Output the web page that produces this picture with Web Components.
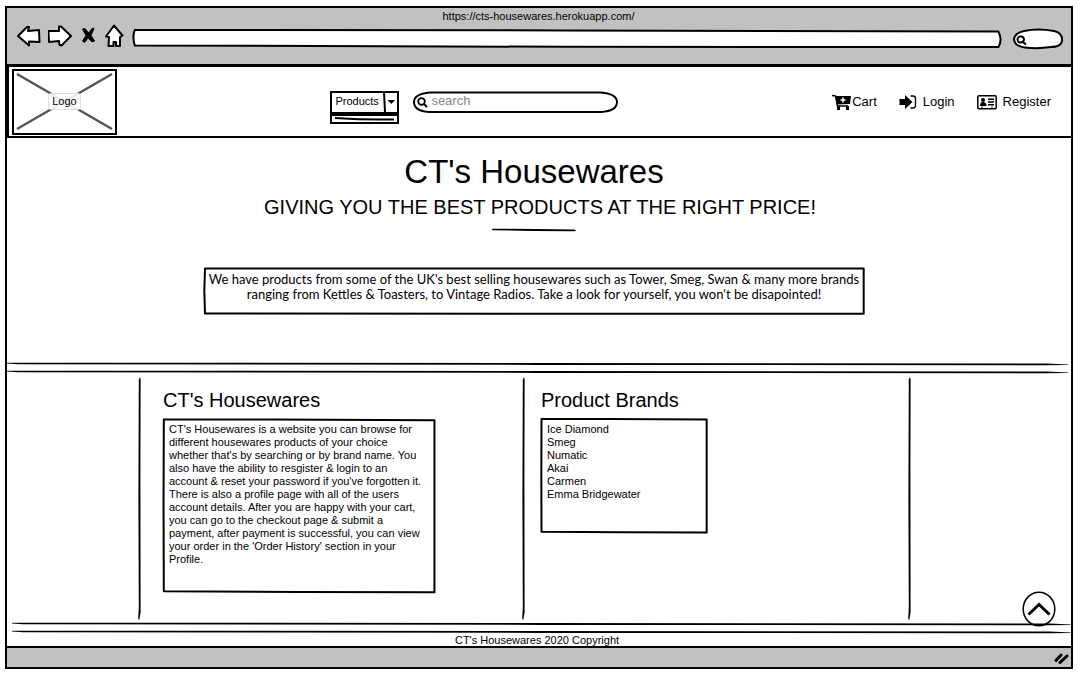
<!DOCTYPE html>
<html lang="en">
<head>
<meta charset="utf-8">
<title>CT's Housewares</title>
<style>
body { margin: 0; background: #fff; color: #000; font: 11px/13px "Liberation Sans", Arial, sans-serif; }
</style>
</head>
<body>
<browser-window address="https://cts-housewares.herokuapp.com/">
  <site-header></site-header>
  <site-hero></site-hero>
  <site-columns></site-columns>
  <site-footer></site-footer>
</browser-window>

<script>
const define = (name, html) => customElements.define(name, class extends HTMLElement {
  connectedCallback() {
    if (this.shadowRoot) return;
    this.attachShadow({ mode: 'open' }).innerHTML = '<style>*{box-sizing:border-box}</style>' +
      html.replace(/\{\{(\w+)\}\}/g, (_, k) => this.getAttribute(k) || '');
  }
});

/* Hand-drawn rectangle around slotted content */
define('sketch-box', `
<style>
:host { display: block; position: relative; }
svg { position: absolute; inset: 0; width: 100%; height: 100%; overflow: visible; pointer-events: none; }
path { fill: none; stroke: #000; stroke-width: 2; stroke-linejoin: round; vector-effect: non-scaling-stroke; }
</style>
<slot></slot>
<svg viewBox="0 0 100 100" preserveAspectRatio="none" aria-hidden="true"><path d="M.3 .9 L40 .9 L99.800 1.300 L99.800 50 L99.800 99.500 L50 99.400 L.3 99 L.2 50Z"/></svg>`);

/* Hand-drawn horizontal rule with tapered ends */
define('sketch-rule', `
<style>
:host { display: block; height: 4px; }
svg { display: block; width: 100%; height: 100%; }
</style>
<svg viewBox="0 0 100 4" preserveAspectRatio="none" aria-hidden="true"><path d="M0 .8 L1 .7 L50 1 L98 1.600 L100 2.400 L100 2.900 L98 3.200 L50 2.900 L1 2.300 L0 1.400Z"/></svg>`);

/* Hand-drawn vertical rule */
define('sketch-divider', `
<style>
:host { display: block; width: 4px; }
svg { display: block; width: 100%; height: 100%; }
</style>
<svg viewBox="0 0 4 100" preserveAspectRatio="none" aria-hidden="true"><path d="M.8 1 L2 0 L2.600 1 L2.400 40 L2.600 97 L1.200 100 L.2 99.600 L.8 95 L.4 50Z"/></svg>`);

define('browser-window', `
<style>
:host { display: block; padding: 6px 5px; }
.window { border: 2px solid #000; }
.chrome { background: #c1c1c1; border-bottom: 3px solid #000; height: 59px; padding: 2px 8px 0 9px; }
.title { text-align: center; line-height: 13px; padding-right: 2px; }
.tools { display: flex; align-items: center; height: 28px; }
button { border: 0; padding: 0; background: none; display: block; }
button svg, .find svg { display: block; }
.icons { display: flex; gap: 7px; align-items: center; margin-top: -2px; }
.icons svg path { fill: #fff; stroke: #000; stroke-width: 2; stroke-linejoin: round; }
.icons svg .solid { fill: none; stroke-width: 4; stroke-linecap: round; }
.address { flex: 1; position: relative; margin: 4px 12px 0 8px; height: 20px; }
.address svg, .find svg.frame { position: absolute; inset: 0; width: 100%; height: 100%; overflow: visible; }
.frame path { fill: #fff; stroke: #000; stroke-width: 2; vector-effect: non-scaling-stroke; }
input { position: relative; display: block; width: 100%; height: 100%; border: 0; background: none; outline: 0; padding: 0 10px; font: inherit; }
.find { position: relative; width: 50px; height: 20px; margin-top: 4px; }
.find .glass { position: absolute; left: 3px; top: 6px; }
.status { display: flex; justify-content: flex-end; align-items: center; height: 21px; background: #c1c1c1; border-top: 2px solid #000; padding-right: 2px; }
</style>
<div class="window">
  <div class="chrome">
    <div class="title">{{address}}</div>
    <div class="tools">
      <div class="icons">
        <button aria-label="Back"><svg width="25" height="22" viewBox="0 0 25 22"><path d="M2 11 L11 2 L13 2 L12 6 L23 5 L23.500 17 L13 16.500 L13 20.500Z"/></svg></button>
        <button aria-label="Forward"><svg width="25" height="22" viewBox="0 0 25 22"><path d="M.5 6 L11 6 L11 1.500 L13 1.500 L23 11 L13.500 20.500 L11.500 20 L11 16 L1 17Z"/></svg></button>
        <button aria-label="Stop"><svg width="18" height="22" viewBox="0 0 18 22"><path d="M2.500 4 L5 3.500 L8.500 8 L12.500 3 L14 3.500 L11 10.500 L14.500 16 L12 17 L8 13 L4.500 17.500 L2.500 16 L6 10.500Z" style="fill:#000;stroke-width:1"/></svg></button>
        <button aria-label="Home"><svg width="20" height="24" viewBox="0 0 20 24"><path d="M9 1.500 L17.500 11.500 L15 13 L15 22 L11 22 L11 18 L8.500 18 L8.500 22 L3.500 22 L4 13 L1 12.500Z"/></svg></button>
      </div>
      <div class="address">
        <svg class="frame" viewBox="0 0 100 20" preserveAspectRatio="none" aria-hidden="true"><path d="M.2 1 L50 1.400 L99.700 2.500 Q100.200 11 99.700 18 L50 17.800 L.2 16.500 Q-.1 8 .2 1Z"/></svg>
        <input aria-label="Address">
      </div>
      <div class="find">
        <svg class="frame" viewBox="0 0 50 20" preserveAspectRatio="none" aria-hidden="true"><path d="M11 2 Q25 -1 41 2 Q50 4 49 12 Q48 18 38 18 Q25 20 12 18.500 Q1 17 1 10 Q2 4 11 2Z"/></svg>
        <svg class="glass" width="12" height="12" viewBox="0 0 12 12" aria-hidden="true"><path d="M5 1.500 Q2 1 1.500 4.500 Q2 8 5 7.500 Q8 7 8 4 Q7 1 5 1.500 M7 7 L10 9.500" fill="none" stroke="#000" stroke-width="2"/></svg>
        <input aria-label="Web search">
      </div>
    </div>
  </div>
  <slot></slot>
  <div class="status"><svg width="15" height="12" viewBox="0 0 15 12" aria-hidden="true"><path d="M2 8.500 L7 3 M6 10.500 L13 4" fill="none" stroke="#000" stroke-width="3" stroke-linecap="round"/></svg></div>
</div>`);

define('logo-placeholder', `
<style>
:host { display: grid; place-items: center; position: relative; width: 105px; height: 66px; border: 2px solid #000; }
svg { position: absolute; inset: 0; width: 100%; height: 100%; }
span { position: relative; padding: 1px 3px; line-height: 13px; border: 1px solid #ddd; border-radius: 3px; background: rgba(255,255,255,.88); }
</style>
<svg viewBox="0 0 101 62" preserveAspectRatio="none" aria-hidden="true"><path d="M3 3 L98 58 M98 3 L3 58" stroke="#555" stroke-width="2.500"/></svg>
<span>Logo</span>`);

define('nav-link', `
<style>
a { display: flex; align-items: center; color: #000; text-decoration: none; font-size: 13px; line-height: 16px; }
</style>
<a href="{{to}}"><slot></slot></a>`);

define('site-header', `
<style>
:host { display: grid; grid-template-columns: 322fr 289fr 453fr; align-items: center; height: 69px; border-bottom: 2px solid #000; border-left: 2px solid #000; }
logo-placeholder { margin: 0 0 0 3px; }
form { display: flex; align-items: flex-start; gap: 14px; padding-top: 11px; }
.menu { position: relative; width: 69px; }
select { display: block; appearance: none; width: 100%; height: 22px; padding: 0 0 2px 3px; font: inherit; color: #000; background: #fff; border: 2px solid #000; border-bottom-width: 1px; border-radius: 0; }
.arrow { position: absolute; right: 0; top: 0; pointer-events: none; }
.drawer { height: 11px; border: 2px solid #000; border-top-width: 3px; padding-top: 1px; }
.search { position: relative; flex: 1; height: 22px; max-width: 205px; }
.search .frame { position: absolute; inset: 0; width: 100%; height: 100%; }
.glass { position: absolute; left: 4px; top: 6px; }
input { position: relative; display: block; width: 100%; height: 100%; border: 0; background: none; padding: 0 8px 2px 18px; font: inherit; font-size: 13px; outline: 0; }
input::placeholder { color: #888; opacity: 1; }
nav { display: flex; justify-content: flex-end; align-items: center; gap: 22px; padding-right: 20px; }
nav svg { display: block; }
.gap { margin-right: 6px; }
</style>
<logo-placeholder></logo-placeholder>
<form>
  <div class="menu">
    <select aria-label="Products"><option>Products</option></select>
    <svg class="arrow" width="17" height="22" viewBox="0 0 17 22" aria-hidden="true"><path d="M2 1 L3 21" stroke="#000" stroke-width="2"/><path d="M5.500 9 L13 9 L9.300 13Z"/></svg>
    <div class="drawer"><svg style="display:block" width="65" height="5" viewBox="0 0 65 5" aria-hidden="true"><path d="M3 1 Q32 3 62 2.500" fill="none" stroke="#000" stroke-width="2"/></svg></div>
  </div>
  <div class="search">
    <svg class="frame" viewBox="0 0 205 22" preserveAspectRatio="none" aria-hidden="true"><path d="M17 1.500 L188 1.500 Q204 3 204 11 Q204 20 188 21 L16 21 Q1 20 1 11 Q1 3 17 1.500Z" fill="#fff" stroke="#000" stroke-width="2"/></svg>
    <svg class="glass" width="12" height="12" viewBox="0 0 12 12" aria-hidden="true"><circle cx="4.500" cy="4.500" r="3.300" fill="none" stroke="#000" stroke-width="1.800"/><path d="M7 7 L10 10" stroke="#000" stroke-width="2"/></svg>
    <input type="search" placeholder="search" aria-label="Search products">
  </div>
</form>
<nav>
  <nav-link to="#cart"><svg width="20" height="16" viewBox="0 0 20 16" aria-hidden="true"><path d="M0 1.500 L3.500 2 L5.500 12 H16" fill="none" stroke="#000" stroke-width="1.500"/><path d="M3.500 2 H19 L18 10 L5 10.500Z"/><path d="M5 12 H8 V16 H5Z M14 12 H17 V16 H14Z"/><path d="M11 3.500 V8.500 M8.500 6 H13.500" stroke="#fff" stroke-width="1.500"/></svg>Cart</nav-link>
  <nav-link to="#login"><svg class="gap" width="18" height="16" viewBox="0 0 18 16" aria-hidden="true"><path d="M.5 5 H6 V1 L13.500 8 L6 15 V11 H.5Z"/><path d="M11.500 2 H14 Q16.500 2 16.500 4.500 V11.500 Q16.500 14 14 14 H11.500" fill="none" stroke="#000" stroke-width="1.300"/></svg>Login</nav-link>
  <nav-link to="#register"><svg class="gap" width="20" height="16" viewBox="0 0 20 16" aria-hidden="true"><rect x=".8" y="1.800" width="18.400" height="13" rx="1" fill="none" stroke="#000" stroke-width="1.500"/><circle cx="6" cy="6" r="2"/><path d="M3 12 Q3 8 6 8 Q9.500 8 9.500 12Z M11 4.500 H17 V6 H11Z M11 7.300 H17 V8.800 H11Z M11 10 H17 V11.500 H11Z"/><path d="M5 12.500 V15 M15 12.500 V15" stroke="#000"/></svg>Register</nav-link>
</nav>`);

define('site-hero', `
<style>
:host { display: flex; flex-direction: column; align-items: center; padding: 14px 10px 48px 0; text-align: center; }
h1 { margin: 0; font-size: 33px; line-height: 40px; font-weight: 400; }
h2 { margin: 2px 0 8px; padding-left: 12px; font-size: 20px; line-height: 26px; font-weight: 400; }
sketch-rule { width: 84px; margin-bottom: 36px; }
sketch-box { width: 662px; max-width: 100%; padding: 4px 4px 12px; }
p { margin: 0; font: 13px/15px Lato, "Liberation Sans", sans-serif; }
</style>
<h1>CT's Housewares</h1>
<h2>GIVING YOU THE BEST PRODUCTS AT THE RIGHT PRICE!</h2>
<sketch-rule></sketch-rule>
<sketch-box><p>We have products from some of the UK's best selling housewares such as Tower, Smeg, Swan &amp; many more brands<br>ranging from Kettles &amp; Toasters, to Vintage Radios. Take a look for yourself, you won't be disapointed!</p></sketch-box>`);

define('site-columns', `
<style>
:host { display: block; }
.rules { display: grid; gap: 4px; padding-right: 3px; }
.grid { display: grid; grid-template-columns: 130fr 384fr 386fr 164fr; min-height: 243px; margin-top: 3px; }
section { display: flex; padding-left: 1px; }
.body { padding: 11px 0 0 21px; }
section + section .body { padding-left: 15px; }
h3 { margin: 0 0 6px; font-size: 20px; line-height: 24px; font-weight: 400; }
sketch-box { padding: 5px 6px; }
.about { width: 272px; min-height: 175px; }
.brands { width: 166px; min-height: 115px; }
p, ul { margin: 0; padding: 0; list-style: none; }
</style>
<div class="rules"><sketch-rule></sketch-rule><sketch-rule></sketch-rule></div>
<div class="grid">
  <div></div>
  <section><sketch-divider></sketch-divider>
    <div class="body"><h3>CT's Housewares</h3>
      <sketch-box class="about"><p>CT's Housewares is a website you can browse for<br>different housewares products of your choice<br>whether that's by searching or by brand name. You<br>also have the ability to resgister &amp; login to an<br>account &amp; reset your password if you've forgotten it.<br>There is also a profile page with all of the users<br>account details. After you are happy with your cart,<br>you can go to the checkout page &amp; submit a<br>payment, after payment is successful, you can view<br>your order in the 'Order History' section in your<br>Profile.</p></sketch-box>
    </div>
  </section>
  <section><sketch-divider></sketch-divider>
    <div class="body"><h3>Product Brands</h3>
      <sketch-box class="brands"><ul><li>Ice Diamond</li><li>Smeg</li><li>Numatic</li><li>Akai</li><li>Carmen</li><li>Emma Bridgewater</li></ul></sketch-box>
    </div>
  </section>
  <section><sketch-divider></sketch-divider></section>
</div>`);

define('site-footer', `
<style>
:host { display: block; position: relative; padding-top: 2px; text-align: center; }
.rules { display: grid; gap: 4px; padding-left: 5px; }
p { margin: 0; line-height: 12px; padding-right: 4px; }
button { position: absolute; right: 15px; bottom: 19px; padding: 0; border: 0; background: none; }
svg { display: block; }
</style>
<div class="rules"><sketch-rule></sketch-rule><sketch-rule></sketch-rule></div>
<p>CT's Housewares 2020 Copyright</p>
<button aria-label="Back to top"><svg width="34" height="36" viewBox="0 0 34 36"><ellipse cx="17" cy="18" rx="15.800" ry="16.800" fill="none" stroke="#000" stroke-width="1.500"/><path d="M6.500 23.500 L17 13.500 L27.500 23.500" fill="none" stroke="#000" stroke-width="3"/></svg></button>`);
</script>
</body>
</html>
